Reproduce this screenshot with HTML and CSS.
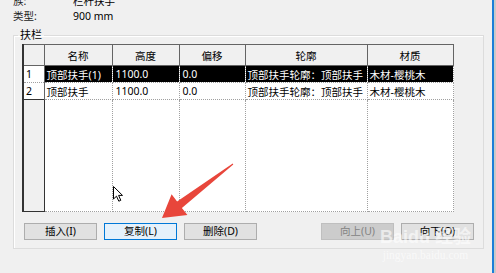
FILE: index.html
```html
<!DOCTYPE html>
<html lang="zh-CN">
<head>
    <meta charset="UTF-8">
    <title>类型属性 - 扶栏</title>
    <link rel="stylesheet" href="styles.css">
</head>
<body>
<div class="screen">
    <div class="dialog">
        <div class="info">
            <span>族:</span><span>栏杆扶手</span>
            <span>类型:</span><span>900 mm</span>
        </div>

        <fieldset class="group">
            <legend>扶栏</legend>
            <table class="grid">
                <colgroup>
                    <col style="width:21px">
                    <col style="width:68px">
                    <col style="width:67px">
                    <col style="width:66px">
                    <col style="width:122px">
                    <col style="width:86px">
                </colgroup>
                <tr class="head">
                    <th class="corner"></th>
                    <th>名称</th>
                    <th>高度</th>
                    <th>偏移</th>
                    <th>轮廓</th>
                    <th>材质</th>
                </tr>
                <tr class="row selected">
                    <td class="num">1</td>
                    <td>顶部扶手(1)</td>
                    <td>1100.0</td>
                    <td>0.0</td>
                    <td>顶部扶手轮廓：顶部扶手</td>
                    <td>木材-樱桃木</td>
                </tr>
                <tr class="row">
                    <td class="num">2</td>
                    <td>顶部扶手</td>
                    <td>1100.0</td>
                    <td>0.0</td>
                    <td>顶部扶手轮廓：顶部扶手</td>
                    <td>木材-樱桃木</td>
                </tr>
                <tr class="filler">
                    <td class="num"></td>
                    <td></td><td></td><td></td><td></td><td></td>
                </tr>
            </table>

            <div class="actions">
                <div class="btn-group">
                    <button class="btn">插入(I)</button>
                    <button class="btn focused">复制(L)</button>
                    <button class="btn">删除(D)</button>
                </div>
                <div class="btn-group">
                    <button class="btn" disabled>向上(U)</button>
                    <button class="btn">向下(O)</button>
                </div>
            </div>
        </fieldset>
    </div>
    <div class="edge-blue"></div>
    <div class="edge-grey"></div>
</div>

<!-- 鼠标指针 -->
<svg class="cursor" width="12" height="17" viewBox="0 0 12 17">
    <path d="M0.5 0.5 L0.5 13 L3.5 10.2 L5.8 15.2 L7.8 14.3 L5.6 9.4 L9.5 9.4 Z" fill="#fff" stroke="#000" stroke-width="1"/>
</svg>

<!-- 红色箭头标注 -->
<svg class="arrow" width="496" height="273" viewBox="0 0 496 273">
    <polygon points="162,218 171.6,194.3 177.1,201.5 232.7,163.6 233.3,164.4 181.9,207.9 187.4,215.1" fill="#e8463b"/>
</svg>

<div class="watermark">
    <div class="wm-logo">Baidu 经验</div>
    <div class="wm-url">jingyan.baidu.com</div>
</div>
</body>
</html>
```

FILE: styles.css
```css
body {
    margin: 0;
    background-color: #f0f0f0;
    font-family: "Noto Sans", "Noto Sans CJK SC", sans-serif;
    font-size: 11px;
    color: #000;
    overflow: hidden;
}
.screen {
    display: flex;
    height: 273px;
}
.dialog {
    width: 492px;
    padding-left: 13px;
    box-sizing: border-box;
}
.edge-blue {
    width: 2px;
    background-color: #1b7fd8;
}
.edge-grey {
    flex: 1;
    background-color: #c9c9c9;
}
.info {
    display: grid;
    grid-template-columns: 60px auto;
    grid-auto-rows: 15px;
    line-height: 15px;
    margin-top: -6px;
    font-size: 10.5px;
}
.info span:nth-child(2n+1) {
    color: #222;
}
.group {
    width: 450px;
    margin: 3px 0 0 0;
    padding: 1px 11px 8px 8px;
    border: 1px solid #dcdcdc;
    box-shadow: inset 1px 1px 0 #fff;
}
.group legend {
    margin-left: -4px;
    padding: 0 2px;
    line-height: 16px;
    font-size: 11px;
}
.grid {
    width: 430px;
    table-layout: fixed;
    border-collapse: collapse;
    background-color: #fff;
    font-size: 10.5px;
    border-left: 2px solid #333;
}
.grid th {
    height: 20px;
    padding: 0;
    font-weight: normal;
    background-color: #f0f0f0;
    border: 1px solid #646464;
    text-align: center;
}
.grid td {
    height: 16px;
    padding: 0 0 0 2px;
    white-space: nowrap;
    overflow: hidden;
    border: 1px dotted #a0a0a0;
}
.row td:nth-child(3),
.row td:nth-child(4) {
    padding-left: 3px;
}
.selected td {
    background-color: #000;
    color: #fff;
}
.selected td.num,
.row td.num {
    background-color: #fff;
    color: #000;
    border-right: 1px solid #646464;
}
.filler td {
    height: 111px;
}
.filler td.num {
    background-color: #f0f0f0;
    border: 1px solid #333;
}
.actions {
    display: flex;
    justify-content: space-between;
    margin: 11px -2px 0 2px;
}
.btn-group {
    display: flex;
    gap: 7px;
}
.btn {
    width: 73px;
    height: 17px;
    padding: 0;
    font-family: "Noto Sans", "Noto Sans CJK SC", sans-serif;
    font-size: 10.5px;
    line-height: 15px;
    color: #000;
    background-color: #e1e1e1;
    border: 1px solid #adadad;
}
.btn.focused {
    background-color: #e5f1fb;
    border-color: #0078d7;
}
.btn:disabled {
    background-color: #cccccc;
    border-color: #bfbfbf;
    color: #838383;
}
.cursor {
    position: absolute;
    left: 113px;
    top: 186px;
}
.arrow {
    position: absolute;
    left: 0;
    top: 0;
}
.watermark {
    position: absolute;
    left: 380px;
    top: 226px;
    color: rgba(255, 255, 255, 0.6);
    text-align: center;
    white-space: nowrap;
    pointer-events: none;
}
.wm-logo {
    font-family: "Liberation Sans", "Noto Sans CJK SC", sans-serif;
    font-size: 18px;
    font-weight: bold;
    line-height: 22px;
}
.wm-url {
    font-family: "Liberation Serif", serif;
    font-size: 11.5px;
    line-height: 14px;
}
```
